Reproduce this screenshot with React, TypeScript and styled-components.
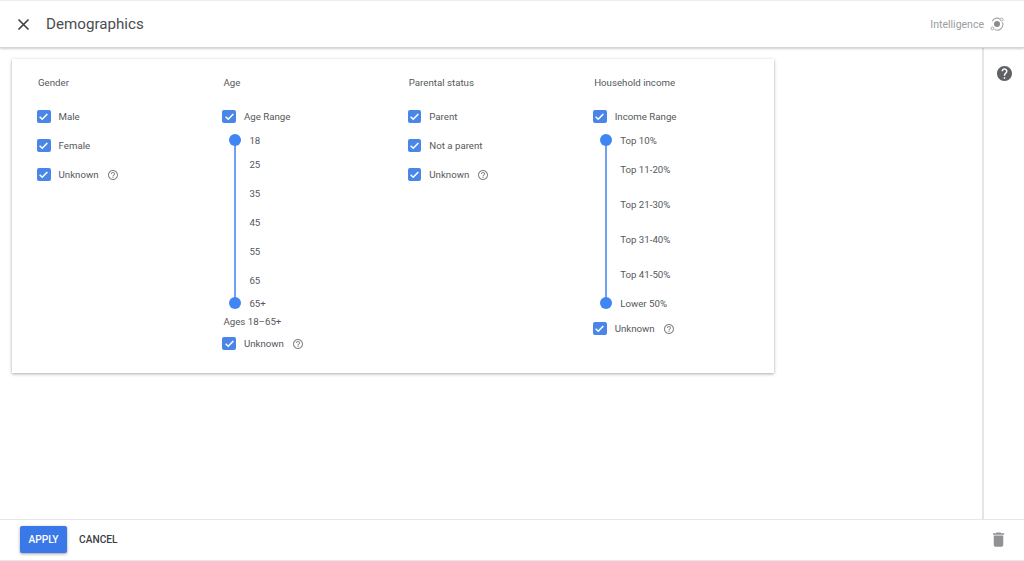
import React from 'react';
import styled, { createGlobalStyle } from 'styled-components';

const GlobalStyle = createGlobalStyle`
  html, body { margin: 0; padding: 0; height: 100%; background: #fff; }
  body { font-family: Roboto, "Noto Sans", sans-serif; color: #3c4043; overflow: hidden; }
`;

const Page = styled.div`
  width: 1024px;
  height: 561px;
  display: flex;
  flex-direction: column;
  background: #fff;
`;

const Header = styled.header`
  position: relative;
  z-index: 2;
  height: 48px;
  flex: none;
  box-sizing: border-box;
  display: flex;
  align-items: center;
  padding: 0 19px 0 17px;
  border-top: 1px solid #eceded;
  border-bottom: 1px solid #d5d6d7;
  box-shadow: 0 1px 2px rgba(60, 64, 67, 0.25);
  background: #fff;
`;

const CloseButton = styled.button`
  border: 0;
  background: none;
  padding: 0;
  width: 13px;
  height: 13px;
  display: flex;
  color: #3c4043;
`;

const Title = styled.h1`
  margin: 0 0 0 16px;
  font-size: 15.15px;
  line-height: 20px;
  font-weight: 400;
  color: #4a4d50;
`;

const Intelligence = styled.div`
  margin-left: auto;
  display: flex;
  align-items: center;
  gap: 5px;
  font-size: 10.5px;
  color: #9a9da0;
`;

const Body = styled.div`
  flex: 1;
  min-height: 0;
  display: flex;
`;

const Main = styled.main`
  flex: 1;
  padding: 11px 0 0 12px;
`;

const Card = styled.section`
  width: 762px;
  height: 314px;
  box-sizing: border-box;
  padding: 17px 0 0 26px;
  display: grid;
  grid-template-columns: repeat(4, 185.4px);
  background: #fff;
  box-shadow: 0 1px 3px rgba(60, 64, 67, 0.45);
`;

const Column = styled.div`
  display: flex;
  flex-direction: column;
  align-items: flex-start;
`;

const ColumnTitle = styled.h2`
  margin: 0 0 13px;
  height: 13px;
  font-size: 9.7px;
  line-height: 13px;
  font-weight: 400;
  color: #55585b;
`;

const Row = styled.label<{ $height?: number }>`
  height: ${(p) => p.$height ?? 29}px;
  display: flex;
  align-items: center;
  font-size: 9.7px;
  color: #55585b;
`;

const Box = styled.span`
  width: 13.5px;
  height: 13.5px;
  margin-left: -1px;
  margin-right: 8px;
  flex: none;
  border-radius: 2px;
  background: #4a86e8;
  display: flex;
  align-items: center;
  justify-content: center;
`;

const HelpIcon = styled.svg`
  width: 12px;
  height: 12px;
  margin-left: 8px;
  color: #808285;
`;

const Slider = styled.div<{ $height: number }>`
  height: ${(p) => p.$height}px;
  margin-top: 3px;
  display: flex;
`;

const Track = styled.div`
  position: relative;
  width: 12px;
  margin: 0 8px 0 6px;
  display: flex;
  flex-direction: column;
  justify-content: space-between;
  align-items: center;
  &::before {
    content: '';
    position: absolute;
    top: 4px;
    bottom: 4px;
    left: 5px;
    width: 2px;
    background: #6ea1f5;
  }
`;

const Knob = styled.span`
  position: relative;
  width: 12px;
  height: 12px;
  border-radius: 50%;
  background: #3f86f4;
`;

const Stops = styled.ol`
  list-style: none;
  margin: 0;
  padding: 0;
  position: relative;
`;

const Stop = styled.li<{ $gap: number }>`
  margin-top: ${(p) => p.$gap}px;
  height: 13px;
  font-size: 9.7px;
  line-height: 13px;
  color: #55585b;
`;

const RangeNote = styled.div`
  margin-top: 6px;
  font-size: 9.7px;
  line-height: 13px;
  color: #55585b;
`;

const Rail = styled.aside`
  width: 42px;
  flex: none;
  box-sizing: border-box;
  border-left: 2px solid #e4e5e6;
  display: flex;
  justify-content: center;
  padding: 17.5px 0 0;
`;

const Footer = styled.footer`
  height: 42px;
  flex: none;
  box-sizing: border-box;
  display: flex;
  align-items: center;
  padding: 0 16px 1px 20px;
  border-top: 1px solid #e6e7e8;
  border-bottom: 1px solid #e6e7e8;
`;

const ApplyButton = styled.button`
  width: 47px;
  height: 27px;
  border: 0;
  border-radius: 2px;
  padding: 0;
  background: #3b78e7;
  color: #fff;
  font: 500 10.2px Roboto, sans-serif;
  box-shadow: 0 1px 3px rgba(60, 64, 67, 0.5);
`;

const CancelButton = styled.button`
  margin-left: 12px;
  border: 0;
  padding: 0;
  background: none;
  color: #3c4043;
  font: 500 10.2px Roboto, sans-serif;
`;

const TrashButton = styled.button`
  margin-left: auto;
  border: 0;
  padding: 0;
  background: none;
  display: flex;
  color: #8f9193;
`;

const Check = () => (
  <Box>
    <svg width="11" height="11" viewBox="0 0 12 12" fill="none">
      <path d="M1.8 6.3 4.6 9 10.2 3.2" stroke="#fff" strokeWidth="1.7" />
    </svg>
  </Box>
);

const Help = () => (
  <HelpIcon viewBox="0 0 24 24" fill="currentColor">
    <path d="M11 18h2v-2h-2v2zm1-16C6.48 2 2 6.48 2 12s4.48 10 10 10 10-4.48 10-10S17.52 2 12 2zm0 18c-4.41 0-8-3.59-8-8s3.59-8 8-8 8 3.59 8 8-3.59 8-8 8zm0-14c-2.21 0-4 1.79-4 4h2c0-1.1.9-2 2-2s2 .9 2 2c0 2-3 1.75-3 5h2c0-2.25 3-2.5 3-5 0-2.21-1.79-4-4-4z" />
  </HelpIcon>
);

const Option = ({ label, help, height }: { label: string; help?: boolean; height?: number }) => (
  <Row $height={height}>
    <Check />
    {label}
    {help && <Help />}
  </Row>
);

type StopItem = { label: string; gap: number };

const ageStops: StopItem[] = [
  { label: '18', gap: 0 },
  { label: '25', gap: 11 },
  { label: '35', gap: 16 },
  { label: '45', gap: 16 },
  { label: '55', gap: 16 },
  { label: '65', gap: 16 },
  { label: '65+', gap: 10 },
];

const incomeStops: StopItem[] = [
  { label: 'Top 10%', gap: 0 },
  { label: 'Top 11-20%', gap: 16 },
  { label: 'Top 21-30%', gap: 22 },
  { label: 'Top 31-40%', gap: 22 },
  { label: 'Top 41-50%', gap: 22 },
  { label: 'Lower 50%', gap: 16 },
];

const RangeSlider = ({ stops, height }: { stops: StopItem[]; height: number }) => (
  <Slider $height={height}>
    <Track>
      <Knob />
      <Knob />
    </Track>
    <Stops>
      {stops.map((s) => (
        <Stop key={s.label} $gap={s.gap}>
          {s.label}
        </Stop>
      ))}
    </Stops>
  </Slider>
);

export default function App() {
  return (
    <Page>
      <GlobalStyle />
      <Header>
        <CloseButton aria-label="Close">
          <svg width="13" height="13" viewBox="0 0 13 13" fill="none">
            <path d="M1.5 1.5l10 10M11.5 1.5l-10 10" stroke="currentColor" strokeWidth="1.6" />
          </svg>
        </CloseButton>
        <Title>Demographics</Title>
        <Intelligence>
          Intelligence
          <svg width="16" height="16" viewBox="0 0 16 16" fill="none">
            <circle cx="8" cy="8" r="3" fill="#8a8c8f" />
            <path d="M3.2 5.2A5.6 5.6 0 0 1 11 2.9M13.4 6.4a5.6 5.6 0 0 1-8 7" stroke="#a5a7a9" strokeWidth="1.1" />
            <circle cx="12.6" cy="3.6" r="1.4" stroke="#a5a7a9" />
            <circle cx="3.4" cy="12.4" r="1.4" stroke="#a5a7a9" />
          </svg>
        </Intelligence>
      </Header>
      <Body>
        <Main>
          <Card>
            <Column>
              <ColumnTitle>Gender</ColumnTitle>
              <Option label="Male" />
              <Option label="Female" />
              <Option label="Unknown" help />
            </Column>
            <Column>
              <ColumnTitle>Age</ColumnTitle>
              <Option label="Age Range" />
              <RangeSlider stops={ageStops} height={175} />
              <RangeNote>Ages 18–65+</RangeNote>
              <Option label="Unknown" help height={31} />
            </Column>
            <Column>
              <ColumnTitle>Parental status</ColumnTitle>
              <Option label="Parent" />
              <Option label="Not a parent" />
              <Option label="Unknown" help />
            </Column>
            <Column>
              <ColumnTitle>Household income</ColumnTitle>
              <Option label="Income Range" />
              <RangeSlider stops={incomeStops} height={175} />
              <Option label="Unknown" help height={39} />
            </Column>
          </Card>
        </Main>
        <Rail>
          <svg width="15" height="15" viewBox="2 2 20 20" fill="#5f6164">
            <path d="M12 2C6.48 2 2 6.48 2 12s4.48 10 10 10 10-4.48 10-10S17.52 2 12 2zm1 17h-2v-2h2v2zm2.07-7.75-.9.92C13.45 12.9 13 13.5 13 15h-2v-.5c0-1.1.45-2.1 1.17-2.83l1.24-1.26c.37-.36.59-.86.59-1.41 0-1.1-.9-2-2-2s-2 .9-2 2H8c0-2.21 1.79-4 4-4s4 1.79 4 4c0 .88-.36 1.68-.93 2.25z" />
          </svg>
        </Rail>
      </Body>
      <Footer>
        <ApplyButton>APPLY</ApplyButton>
        <CancelButton>CANCEL</CancelButton>
        <TrashButton aria-label="Delete">
          <svg width="19" height="19" viewBox="0 0 24 24" fill="currentColor">
            <path d="M6 19c0 1.1.9 2 2 2h8c1.1 0 2-.9 2-2V7H6v12zM19 4h-3.5l-1-1h-5l-1 1H5v2h14V4z" />
          </svg>
        </TrashButton>
      </Footer>
    </Page>
  );
}
